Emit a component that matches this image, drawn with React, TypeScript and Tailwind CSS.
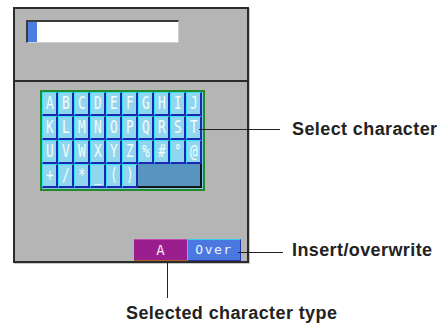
const rows = [
  ["A", "B", "C", "D", "E", "F", "G", "H", "I", "J"],
  ["K", "L", "M", "N", "O", "P", "Q", "R", "S", "T"],
  ["U", "V", "W", "X", "Y", "Z", "%", "#", "°", "@"],
];
const lastRow = ["+", "/", "*", "_", "(", ")"];

function Key({ ch }: { ch: string }) {
  return (
    <div className="w-[16px] h-[24px] flex items-center justify-center bg-[#90d6ee] border-l border-t border-l-[#38e4f4] border-t-[#38e4f4] border-r-2 border-b-2 border-r-[#1c28b4] border-b-[#1c28b4]">
      <span className="text-[#f2fcff] text-[16px] leading-none font-['DejaVu_Sans_Mono',monospace] scale-x-[0.8] scale-y-[1.1]">
        {ch}
      </span>
    </div>
  );
}

export default function App() {
  return (
    <div className="relative w-[437px] h-[325px] bg-white overflow-hidden font-['Liberation_Sans',Arial,sans-serif]">
      {/* Panel */}
      <div className="ml-[13px] pt-[7px]">
        <div className="w-[236px] h-[256px] bg-[#b5b5b5] border-2 border-[#2b2b2b] shadow-[1px_1px_0_#c9c9c9] flex flex-col">
          <div className="h-[71px] border-b-2 border-[#2b2b2b] box-content">
            <div className="ml-[11px] mt-[11px] w-[153px] h-[23px] bg-white border-t-2 border-l-2 border-[#3c3c3c] border-r border-b border-r-[#c8d0d0] border-b-[#c8d0d0] flex">
              <div className="w-[9px] h-full bg-[#4e7ee2]" />
            </div>
          </div>
          <div className="flex-1 flex flex-col">
            <div className="ml-[25px] mt-[8px] w-[165px] h-[101px] border-2 border-[#258a2c] bg-[#7fc6e0] flex flex-col">
              {rows.map((r, i) => (
                <div key={i} className="flex">
                  {r.map((c) => (
                    <Key key={c} ch={c} />
                  ))}
                </div>
              ))}
              <div className="flex">
                {lastRow.map((c) => (
                  <Key key={c} ch={c} />
                ))}
                <div className="w-[64px] h-[24px] bg-[#5794bf] border-r-2 border-b-2 border-[#141414]" />
              </div>
            </div>
            <div className="mt-auto flex justify-end pr-[6px]">
              <div className="w-[53px] h-[22px] bg-[#9b1e8f] border-t border-t-[#c04aa8] border-b border-b-[#b0602a] flex items-center justify-center text-[#f4e8f4] text-[14px] font-['DejaVu_Sans_Mono',monospace]">
                A
              </div>
              <div className="w-[54px] h-[22px] bg-[#4b78e0] border-t border-l border-t-[#36cff0] border-l-[#36cff0] border-r border-b border-r-[#2238a8] border-b-[#2238a8] flex items-center justify-center text-[#eef4ff] text-[13px] tracking-[1.5px] font-['DejaVu_Sans_Mono',monospace]">
                Over
              </div>
            </div>
          </div>
        </div>
      </div>

      {/* Callouts */}
      <div className="absolute left-[199px] top-[129px] w-[81px] h-px bg-[#222]" />
      <div className="absolute left-[292px] top-[118px] text-[18px] tracking-[0.4px] font-bold text-[#222] leading-[22px] whitespace-nowrap">
        Select character
      </div>

      <div className="absolute left-[238px] top-[252px] w-[45px] h-px bg-[#222]" />
      <div className="absolute left-[292px] top-[239px] text-[18px] tracking-[0.4px] font-bold text-[#222] leading-[22px] whitespace-nowrap">
        Insert/overwrite
      </div>

      <div className="absolute left-[167px] top-[262px] w-px h-[36px] bg-[#222]" />
      <div className="absolute left-[126px] top-[302px] text-[18px] tracking-[0.4px] font-bold text-[#222] leading-[22px] whitespace-nowrap">
        Selected character type
      </div>
    </div>
  );
}
